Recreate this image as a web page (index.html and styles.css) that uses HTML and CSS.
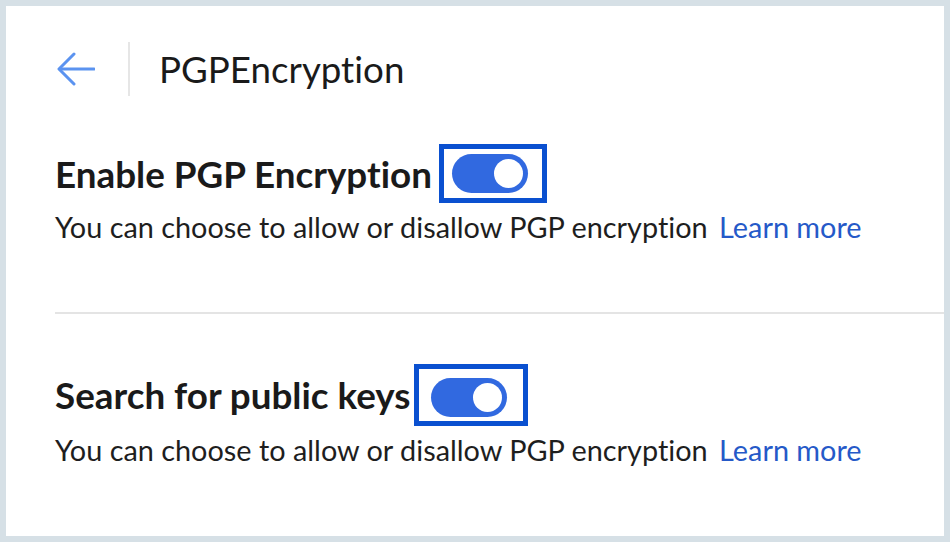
FILE: index.html
```html
<!doctype html>
<html lang="en">
    <head>
        <meta charset="UTF-8" />
        <meta name="viewport" content="width=device-width, initial-scale=1.0" />
        <title>PGPEncryption</title>
        <link rel="stylesheet" href="styles.css">
    </head>
    <body>
        <div class="panel">
            <div class="header">
                <button class="back" type="button" aria-label="Back">
                    <svg width="38" height="34" viewBox="0 0 38 34" fill="none" stroke="#5b93f0" stroke-width="3" stroke-linecap="round" stroke-linejoin="round">
                        <path d="M37 17H3" />
                        <path d="M17 2L2 17L17 32" />
                    </svg>
                </button>
                <span class="sep"></span>
                <h1>PGPEncryption</h1>
            </div>

            <div class="setting">
                <div class="setting-title">
                    <h2>Enable PGP Encryption</h2>
                    <span class="toggle-box">
                        <span class="toggle"><span class="knob"></span></span>
                    </span>
                </div>
                <p>You can choose to allow or disallow PGP encryption <a href="#">Learn more</a></p>
            </div>

            <hr class="divider">

            <div class="setting">
                <div class="setting-title tight">
                    <h2>Search for public keys</h2>
                    <span class="toggle-box wide">
                        <span class="toggle"><span class="knob"></span></span>
                    </span>
                </div>
                <p>You can choose to allow or disallow PGP encryption <a href="#">Learn more</a></p>
            </div>
        </div>
    </body>
</html>
```

FILE: styles.css
```css
* {
    box-sizing: border-box;
    margin: 0;
    padding: 0;
}

body {
    font-family: Lato, 'Open Sans', sans-serif;
    font-variant-ligatures: none;
    background-color: #d6e0e6;
    padding: 6px;
    color: #1e1e1e;
}

.panel {
    background-color: #fff;
    height: 530px;
    padding-left: 49px;
}

.header {
    display: flex;
    align-items: center;
    padding-top: 36px;
    padding-bottom: 48px;
}

.back {
    border: none;
    background: none;
    width: 38px;
    height: 34px;
    margin-left: 2px;
    display: flex;
}

.sep {
    width: 2px;
    height: 54px;
    background-color: #e6e6e6;
    margin-left: 33px;
    margin-right: 29px;
}

h1 {
    font-size: 36.7px;
    font-weight: 400;
    color: #1a1a1a;
}

.setting-title {
    display: flex;
    align-items: center;
    gap: 7px;
}

.setting-title.tight {
    gap: 3px;
}

h2 {
    font-size: 36.8px;
    font-weight: 700;
    color: #1a1a1a;
}

.toggle-box {
    display: flex;
    border: 5px solid #0a50d0;
    padding: 5px 14px 5px 8px;
}

.toggle-box.wide {
    padding: 9px 16px 4px 12px;
}

.toggle {
    width: 76px;
    height: 39px;
    border-radius: 20px;
    background-color: #3169e0;
    display: flex;
    align-items: center;
    justify-content: flex-end;
    padding-right: 5px;
}

.knob {
    width: 29px;
    height: 29px;
    border-radius: 50%;
    background-color: #fff;
}

.setting p {
    font-size: 28.85px;
    margin-top: 7px;
}

.setting a {
    color: #2559c8;
    text-decoration: none;
    margin-left: 4px;
}

.divider {
    border: none;
    height: 2px;
    background-color: #e4e4e4;
    margin-top: 68px;
    margin-bottom: 50px;
}
```
